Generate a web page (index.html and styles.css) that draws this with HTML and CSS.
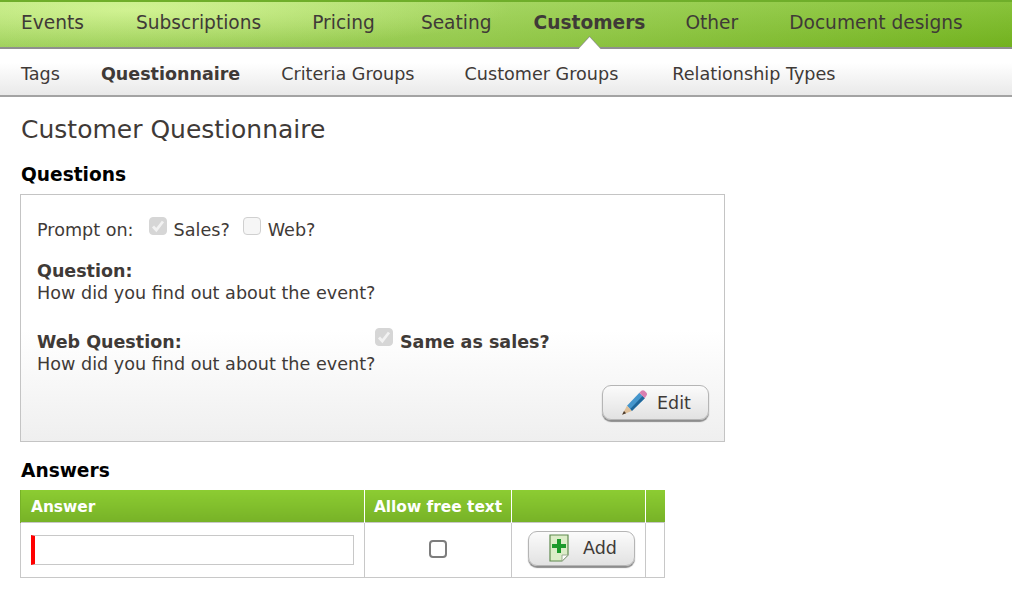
FILE: index.html
```html
<!DOCTYPE html>
<html lang="en">
<head>
    <meta charset="UTF-8">
    <meta name="viewport" content="width=device-width, initial-scale=1.0">
    <title>Customer Questionnaire</title>
    <link rel="stylesheet" href="styles.css">
</head>
<body>
    <nav class="main-nav">
        <a class="nav-events">Events</a>
        <a class="nav-subs">Subscriptions</a>
        <a class="nav-pricing">Pricing</a>
        <a class="nav-seating">Seating</a>
        <a class="nav-customers active">Customers</a>
        <a class="nav-other">Other</a>
        <a>Document designs</a>
    </nav>
    <nav class="sub-nav">
        <a class="sub-tags">Tags</a>
        <a class="sub-quest active">Questionnaire</a>
        <a class="sub-criteria">Criteria Groups</a>
        <a class="sub-groups">Customer Groups</a>
        <a>Relationship Types</a>
    </nav>

    <main class="content">
        <h1>Customer Questionnaire</h1>

        <h2>Questions</h2>
        <section class="question-box">
            <div class="prompt-row">
                <span class="prompt-label">Prompt on:</span>
                <span class="fake-check checked"><svg viewBox="0 0 16 16"><path d="M3 8.500l3.300 3.500 6.700-8.500" fill="none" stroke="#f2f2f2" stroke-width="2.800"/></svg></span>
                <span class="check-text">Sales?</span>
                <span class="fake-check"></span>
                <span class="check-text">Web?</span>
            </div>
            <div class="field">
                <strong>Question:</strong>
                <div>How did you find out about the event?</div>
            </div>
            <div class="field web-field">
                <div class="web-head">
                    <strong class="web-label">Web Question:</strong>
                    <span class="fake-check checked"><svg viewBox="0 0 16 16"><path d="M3 8.500l3.300 3.500 6.700-8.500" fill="none" stroke="#f2f2f2" stroke-width="2.800"/></svg></span>
                    <strong class="same-label">Same as sales?</strong>
                </div>
                <div>How did you find out about the event?</div>
            </div>
            <div class="box-actions">
                <button class="btn" type="button">
                    <svg class="btn-icon" viewBox="0 0 26 26">
                        <path d="M6.500 15.500L18 3.500l5 5L11 20.500z" fill="#4596cc"/>
                        <path d="M9.500 18.500L21 6.500l2 2L11 20.500z" fill="#1f6699"/>
                        <path d="M18 3.500l1.800-1.800c1-.9 2.300-.8 3.200.1l1.400 1.400c.9.9 1 2.200.1 3.100L23 8.500z" fill="#d97fb0"/>
                        <path d="M6.500 15.500l4.500 5-9 3.500z" fill="#dfc09a"/>
                        <path d="M3.700 20.500l2 2-3.700 1.500z" fill="#4a3a2c"/>
                    </svg>
                    <span>Edit</span>
                </button>
            </div>
        </section>

        <h2 class="answers-title">Answers</h2>
        <table class="answers">
            <thead>
                <tr>
                    <th class="col-answer">Answer</th>
                    <th class="col-free">Allow free text</th>
                    <th class="col-add"></th>
                    <th class="col-end"></th>
                </tr>
            </thead>
            <tbody>
                <tr>
                    <td><input class="answer-input" type="text"></td>
                    <td class="center"><input class="free-check" type="checkbox"></td>
                    <td class="center">
                        <button class="btn add-btn" type="button">
                            <svg class="btn-icon" viewBox="0 0 28 28">
                                <path d="M4 1h18v20l-6 6H4z" fill="#dcedc8" stroke="#5f8a4f" stroke-width="1.200"/>
                                <path d="M16 27v-6h6z" fill="#fff" stroke="#9aaa90"/>
                                <path d="M11 5h4v5h5v4h-5v5h-4v-5H6v-4h5z" fill="#1d9a2c"/>
                            </svg>
                            <span>Add</span>
                        </button>
                    </td>
                    <td></td>
                </tr>
            </tbody>
        </table>
    </main>
</body>
</html>
```

FILE: styles.css
```css
body {
    margin: 0;
    padding: 0;
    background: white;
    color: #3f3a37;
    font-family: "DejaVu Sans", Verdana, sans-serif;
    font-size: 17.6px;
}

strong { font-size: 17.5px; }

.main-nav {
    display: flex;
    align-items: center;
    box-sizing: border-box;
    height: 49px;
    padding: 0 0 4px 21px;
    border-top: 2px solid #6fae2a;
    border-bottom: 2px solid #8f8f8f;
    background:
        linear-gradient(to bottom, rgba(255, 255, 255, 0.12), rgba(0, 0, 0, 0.05)),
        radial-gradient(ellipse 380px 40px at 130px 8px, rgba(210, 246, 140, 0.9), rgba(210, 246, 140, 0)),
        linear-gradient(to right, #a8dc62, #9bd24f 45%, #78bb20);
    font-size: 18.6px;
}

.main-nav .active {
    position: relative;
    font-weight: bold;
}

/* white notch under the current section */
.main-nav .active::before,
.main-nav .active::after {
    content: "";
    position: absolute;
    left: 45px;
    width: 22px;
    height: 12px;
    clip-path: polygon(50% 0, 100% 100%, 0 100%);
}

.main-nav .active::before {
    bottom: -15px;
    background: #8f8f8f;
}

.main-nav .active::after {
    bottom: -16px;
    background: white;
}

.nav-events { margin-right: 52px; }
.nav-subs { margin-right: 51px; }
.nav-pricing { margin-right: 46px; }
.nav-seating { margin-right: 42px; }
.nav-customers { margin-right: 40px; }
.nav-other { margin-right: 51px; }

.sub-nav {
    display: flex;
    align-items: center;
    box-sizing: border-box;
    height: 48px;
    padding: 3px 0 0 21px;
    border-bottom: 2px solid #a3a3a3;
    background: linear-gradient(to bottom, white 30%, #e9e9e9);
    font-size: 17.6px;
}

.sub-nav .active {
    font-size: 17.5px;
    font-weight: bold;
}

.sub-tags { margin-right: 41px; }
.sub-quest { margin-right: 41px; }
.sub-criteria { margin-right: 50px; }
.sub-groups { margin-right: 54px; }

.content {
    padding: 0 20px;
}

h1 {
    margin: 17px 0 0 1px;
    font-size: 25px;
    font-weight: normal;
    line-height: 32px;
}

h2 {
    margin: 17px 0 7px 1px;
    color: black;
    font-size: 18.6px;
    line-height: 24px;
}

.question-box {
    box-sizing: border-box;
    width: 705px;
    height: 248px;
    padding: 22px 15px 0 16px;
    border: 1px solid #c4c4c4;
    background: linear-gradient(to bottom, white 55%, #efefef);
}

.prompt-row {
    display: flex;
    align-items: center;
    height: 26px;
}

.prompt-label { margin-right: 15px; }
.check-text { margin: 0 13px 0 7px; }

.fake-check {
    display: inline-block;
    box-sizing: border-box;
    flex: none;
    width: 18px;
    height: 18px;
    margin-top: -8px;
    border: 1px solid #d0d0d0;
    border-radius: 4px;
    background: #f6f6f6;
}

.fake-check.checked {
    border-color: #d6d6d6;
    background: #d6d6d6;
}

.fake-check svg {
    display: block;
    width: 16px;
    height: 16px;
}

.field {
    margin-top: 17px;
    line-height: 22px;
}

.web-field { margin-top: 27px; }

.web-head {
    display: flex;
    align-items: center;
}

.web-head .fake-check { margin-top: -10px; }

.web-label { width: 338px; }
.same-label { margin-left: 7px; }

.box-actions {
    display: flex;
    justify-content: flex-end;
    margin-top: 10px;
}

.btn {
    display: flex;
    align-items: center;
    gap: 9px;
    box-sizing: border-box;
    width: 107px;
    height: 35px;
    padding: 0 0 0 17px;
    border: 1px solid #b5b5b5;
    border-radius: 9px;
    background: linear-gradient(to bottom, #fbfbfb, #e2e2e2);
    box-shadow: 0 2px 1px #8d8d8d;
    color: #3f3a37;
    font-family: inherit;
    font-size: 17.5px;
}

.btn-icon {
    flex: none;
    width: 28px;
    height: 28px;
}

.answers-title {
    margin: 17px 0 7px 1px;
}

.answers {
    width: 645px;
    table-layout: fixed;
    border-collapse: collapse;
}

.answers th {
    height: 31px;
    padding: 1px 10px 0;
    border-left: 1px solid white;
    background: linear-gradient(to bottom, #8ccc32, #77b227);
    color: white;
    font-size: 15.4px;
    text-align: left;
}

.answers th:first-child { border-left: 1px solid #77b227; }
.col-answer { width: 323px; }
.col-free { width: 146px; }
.col-add { width: 113px; }

.answers .col-free {
    padding: 1px 0 0;
    text-align: center;
}

.answers td {
    box-sizing: border-box;
    height: 55px;
    padding: 0 10px;
    border: 1px solid #c8c8c8;
}

.center { text-align: center; }

.answers .add-btn {
    margin: 0 0 4px 6px;
}

.answer-input {
    display: block;
    box-sizing: border-box;
    width: 323px;
    height: 30px;
    padding: 0 4px;
    border: 1px solid #c8c8c8;
    border-left: 4px solid #f00;
    outline: none;
}

.free-check {
    display: block;
    width: 18px;
    height: 18px;
    margin: 0 auto 2px;
    border: 2px solid #7d7d7d;
    border-radius: 4px;
    appearance: none;
    background: white;
}
```
